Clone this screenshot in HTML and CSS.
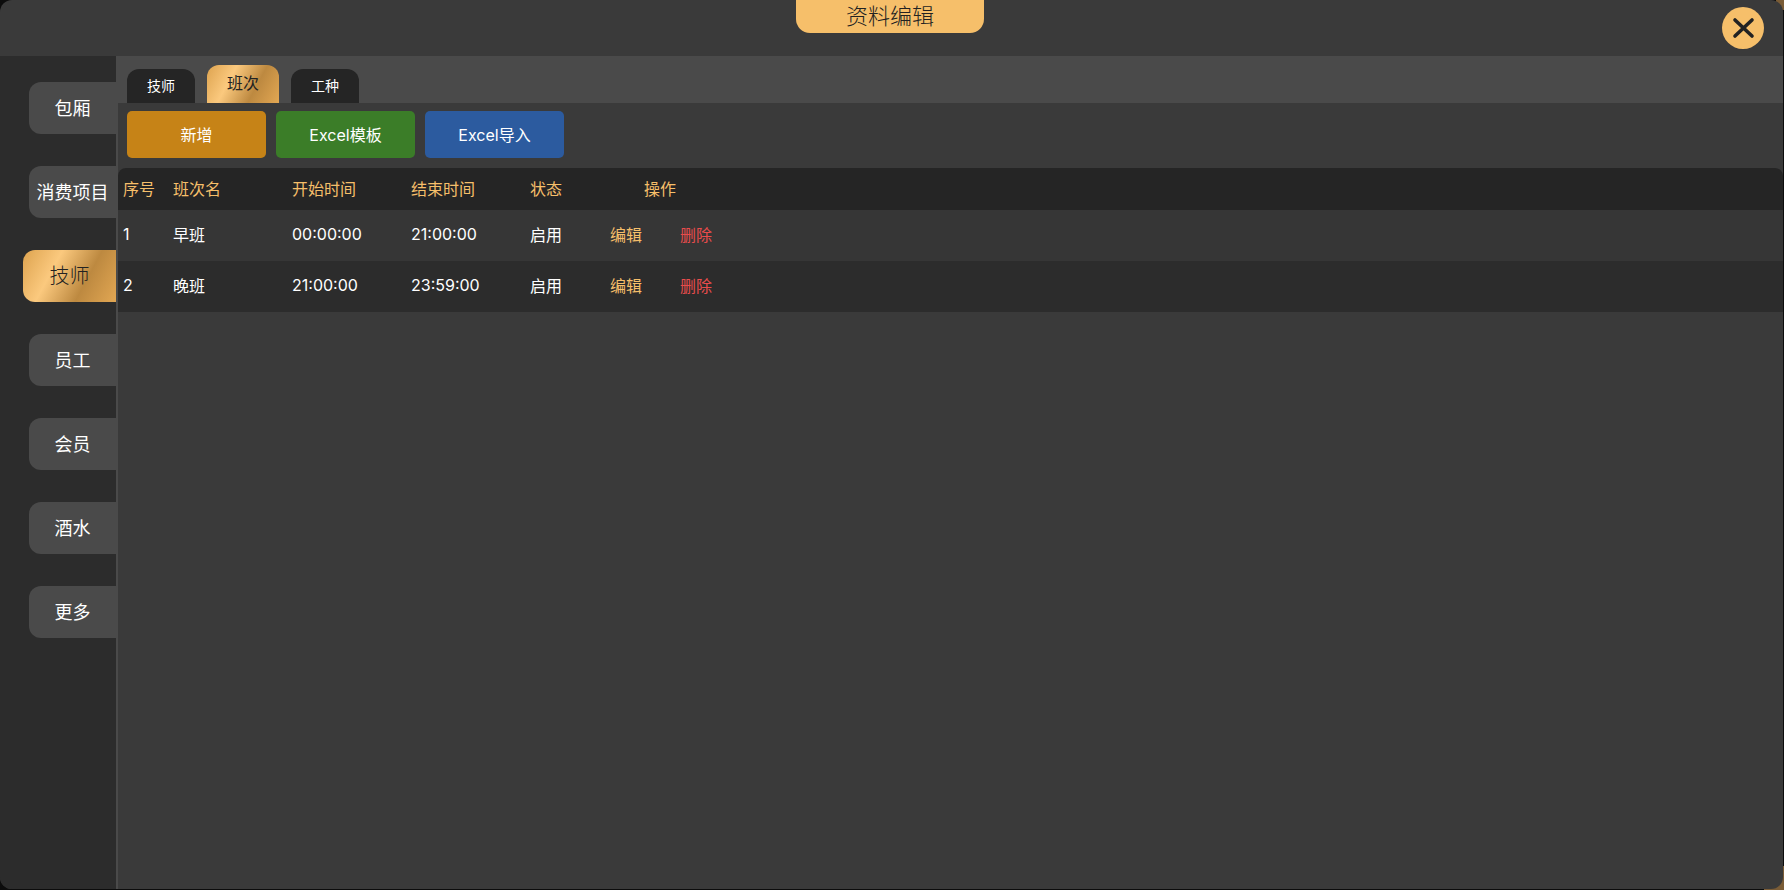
FILE: index.html
```html
<!DOCTYPE html>
<html lang="zh-CN">
<head>
  <meta charset="UTF-8">
  <title>资料编辑</title>
  <link rel="stylesheet" href="styles.css">
</head>
<body>
  <div class="window">
    <header class="header">
      <h1 class="title">资料编辑</h1>
      <button class="close" type="button" aria-label="关闭">
        <svg viewBox="0 0 42 42" width="42" height="42">
          <path d="M13 13 L30 29 M30 13 L13 29" fill="none" stroke="#222" stroke-width="3.6" stroke-linecap="round"/>
        </svg>
      </button>
    </header>

    <div class="body">
      <nav class="sidebar">
        <button class="side-item" type="button">包厢</button>
        <button class="side-item" type="button">消费项目</button>
        <button class="side-item active" type="button">技师</button>
        <button class="side-item" type="button">员工</button>
        <button class="side-item" type="button">会员</button>
        <button class="side-item" type="button">酒水</button>
        <button class="side-item" type="button">更多</button>
      </nav>

      <main class="content">
        <div class="tabs">
          <button class="tab" type="button">技师</button>
          <button class="tab active" type="button">班次</button>
          <button class="tab" type="button">工种</button>
        </div>

        <div class="toolbar">
          <button class="btn btn-add" type="button">新增</button>
          <button class="btn btn-template" type="button">Excel模板</button>
          <button class="btn btn-import" type="button">Excel导入</button>
        </div>

        <table class="table">
          <colgroup>
            <col class="col-no">
            <col class="col-text">
            <col class="col-text">
            <col class="col-text">
            <col class="col-status">
            <col class="col-action">
            <col>
          </colgroup>
          <thead>
            <tr>
              <th>序号</th>
              <th>班次名</th>
              <th>开始时间</th>
              <th>结束时间</th>
              <th>状态</th>
              <th class="center">操作</th>
              <td></td>
            </tr>
          </thead>
          <tbody>
            <tr>
              <td>1</td>
              <td>早班</td>
              <td>00:00:00</td>
              <td>21:00:00</td>
              <td>启用</td>
              <td>
                <div class="actions">
                  <button class="edit" type="button">编辑</button>
                  <button class="delete" type="button">删除</button>
                </div>
              </td>
              <td></td>
            </tr>
            <tr>
              <td>2</td>
              <td>晚班</td>
              <td>21:00:00</td>
              <td>23:59:00</td>
              <td>启用</td>
              <td>
                <div class="actions">
                  <button class="edit" type="button">编辑</button>
                  <button class="delete" type="button">删除</button>
                </div>
              </td>
              <td></td>
            </tr>
          </tbody>
        </table>
      </main>
    </div>
  </div>
</body>
</html>
```

FILE: styles.css
```css
* {
  box-sizing: border-box;
}

body {
  margin: 0;
  height: 100vh;
  padding: 0 1px 1px 0;
  background:
    linear-gradient(#7a5c36, #7a5c36) top right / 8px 10px no-repeat,
    linear-gradient(#7a5c36, #7a5c36) bottom right / 20px 24px no-repeat,
    #0c0c0c;
  font-family: Inter, "Noto Sans CJK SC", sans-serif;
  font-size: 16px;
  color: #fff;
}

button {
  margin: 0;
  padding: 0;
  border: none;
  background: none;
  font: inherit;
  color: inherit;
  cursor: pointer;
}

.window {
  height: 100%;
  display: flex;
  flex-direction: column;
  background: #3a3a3a;
  border-radius: 12px;
  overflow: hidden;
}

.header {
  display: grid;
  grid-template-columns: 1fr 188px 1fr;
  align-items: start;
  height: 56px;
  padding: 0 19px 0 16px;
}

.title {
  grid-column: 2;
  height: 33px;
  margin: 0;
  background: #f6bf6a;
  border-radius: 0 0 14px 14px;
  font-size: 22px;
  font-weight: 300;
  line-height: 33px;
  text-align: center;
  color: #222;
}

.close {
  justify-self: end;
  width: 42px;
  height: 42px;
  margin-top: 7px;
  background: #f6bf6a;
  border-radius: 50%;
}

.close svg {
  display: block;
}

.body {
  flex: 1;
  display: flex;
  min-height: 0;
}

.sidebar {
  width: 118px;
  display: flex;
  flex-direction: column;
  align-items: flex-end;
  gap: 32px;
  padding-top: 26px;
  background: #2c2c2c;
  border-right: 2px solid #4a4a4a;
}

.side-item {
  width: 87px;
  height: 52px;
  padding-bottom: 3px;
  background: #4a4a4a;
  border-radius: 12px 0 0 12px;
  font-size: 18px;
}

.side-item.active {
  width: 93px;
  font-size: 20px;
  font-weight: 300;
}

.side-item.active,
.tab.active {
  background: linear-gradient(118deg, #dda34f, #fbc97e 33%, #bd8940 66%, #e2a753);
  color: #222;
}

.content {
  flex: 1;
  min-width: 0;
}

.tabs {
  display: flex;
  align-items: flex-end;
  gap: 12px;
  height: 47px;
  padding-left: 9px;
  background: #4a4a4a;
}

.tab {
  width: 68px;
  height: 34px;
  padding-bottom: 3px;
  background: #252525;
  border-radius: 12px 12px 0 0;
  font-size: 14px;
}

.tab.active {
  width: 72px;
  height: 38px;
  padding-bottom: 5px;
  font-size: 16px;
}

.toolbar {
  display: flex;
  gap: 10px;
  padding: 8px 9px 10px;
}

.btn {
  width: 139px;
  height: 47px;
  padding-bottom: 2px;
  border-radius: 5px;
}

.btn-add {
  background: #c68317;
}

.btn-template {
  background: #3b7d28;
}

.btn-import {
  background: #2c5b9f;
}

.table {
  width: 100%;
  table-layout: fixed;
  border-collapse: collapse;
  border-radius: 8px 8px 0 0;
  overflow: hidden;
}

.col-no {
  width: 50px;
}

.col-text {
  width: 119px;
}

.col-status {
  width: 75px;
}

.col-action {
  width: 120px;
}

.table th,
.table td {
  height: 51px;
  padding: 0 0 3px 5px;
  text-align: left;
}

.table thead th,
.table thead td {
  height: 42px;
  background: #252525;
  font-weight: 400;
  color: #f6bf6a;
}

.table .center {
  padding-left: 0;
  text-align: center;
}

.table tbody tr:nth-child(odd) {
  background: #363636;
}

.table tbody tr:nth-child(even) {
  background: #2c2c2c;
}

.actions {
  display: flex;
  gap: 38px;
  padding-left: 5px;
}

.edit {
  color: #f6bf6a;
}

.delete {
  color: #e84c4c;
}
```
